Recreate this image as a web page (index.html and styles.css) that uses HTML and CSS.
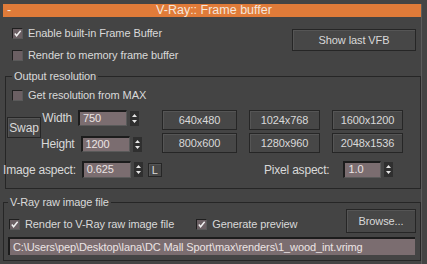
FILE: index.html
```html
<!DOCTYPE html>
<html lang="en">
<head>
    <meta charset="UTF-8">
    <title>V-Ray:: Frame buffer</title>
    <link rel="stylesheet" href="styles.css">
</head>
<body>
    <div class="rollout">
        <div class="title">
            <span class="minus">-</span>
            <span class="title-text">V-Ray:: Frame buffer</span>
        </div>

        <div class="top">
            <div class="checks">
                <label class="check"><span class="box on"><svg viewBox="0 0 10 10"><path d="M2 5 L4 7.5 L8.5 2" /></svg></span>Enable built-in Frame Buffer</label>
                <label class="check"><span class="box"></span>Render to memory frame buffer</label>
            </div>
            <button class="btn vfb">Show last VFB</button>
        </div>

        <fieldset class="group res">
            <legend>Output resolution</legend>
            <label class="check"><span class="box"></span>Get resolution from MAX</label>

            <div class="size">
                <button class="btn swap">Swap</button>
                <div class="fields">
                    <div class="field">
                        <span class="lbl">Width</span>
                        <span class="num">750</span>
                        <span class="spin"><svg viewBox="0 0 9 15"><path d="M4.5 3 L7 6 L2 6 Z M4.5 12 L7 9 L2 9 Z" /></svg></span>
                    </div>
                    <div class="field">
                        <span class="lbl">Height</span>
                        <span class="num">1200</span>
                        <span class="spin"><svg viewBox="0 0 9 15"><path d="M4.5 3 L7 6 L2 6 Z M4.5 12 L7 9 L2 9 Z" /></svg></span>
                    </div>
                </div>
                <div class="presets">
                    <button class="btn">640x480</button>
                    <button class="btn">1024x768</button>
                    <button class="btn">1600x1200</button>
                    <button class="btn">800x600</button>
                    <button class="btn">1280x960</button>
                    <button class="btn">2048x1536</button>
                </div>
            </div>

            <div class="aspect">
                <div class="field image">
                    <span class="lbl wide">Image aspect:</span>
                    <span class="num">0.625</span>
                    <span class="spin"><svg viewBox="0 0 9 15"><path d="M4.5 3 L7 6 L2 6 Z M4.5 12 L7 9 L2 9 Z" /></svg></span>
                    <button class="btn lock">L</button>
                </div>
                <div class="field pixel">
                    <span class="lbl">Pixel aspect:</span>
                    <span class="num small">1.0</span>
                    <span class="spin"><svg viewBox="0 0 9 15"><path d="M4.5 3 L7 6 L2 6 Z M4.5 12 L7 9 L2 9 Z" /></svg></span>
                </div>
            </div>
        </fieldset>

        <fieldset class="group raw">
            <legend>V-Ray raw image file</legend>
            <div class="raw-row">
                <label class="check"><span class="box on"><svg viewBox="0 0 10 10"><path d="M2 5 L4 7.5 L8.5 2" /></svg></span>Render to V-Ray raw image file</label>
                <label class="check preview"><span class="box on"><svg viewBox="0 0 10 10"><path d="M2 5 L4 7.5 L8.5 2" /></svg></span>Generate preview</label>
                <button class="btn browse">Browse...</button>
            </div>
            <div class="path">C:\Users\pep\Desktop\lana\DC Mall Sport\max\renders\1_wood_int.vrimg</div>
        </fieldset>
    </div>
</body>
</html>
```

FILE: styles.css
```css
body {
    margin: 0;
    width: 427px;
    height: 264px;
    overflow: hidden;
    background-color: #444444;
    color: #d9d9d9;
    font-family: "Liberation Sans", Arial, sans-serif;
    font-size: 11px;
    letter-spacing: -0.1px;
}
.rollout {
    margin: 4px 0 0 3px;
    width: 418px;
    height: 260px;
    border-right: 1px solid #5c5c5c;
}
.title {
    height: 13px;
    line-height: 13px;
    background-color: #e07b39;
    color: #f4e6dc;
    display: flex;
    padding-left: 4px;
    font-size: 12.5px;
    letter-spacing: 0;
}
.title .minus {
    width: 10px;
}
.title .title-text {
    flex: 1;
    text-align: center;
    padding-right: 10px;
}
.top {
    display: flex;
    justify-content: space-between;
    padding: 5px 5px 0 9px;
}
.check {
    display: flex;
    align-items: center;
    height: 22px;
    white-space: nowrap;
}
.box {
    flex: none;
    width: 9px;
    height: 9px;
    margin-right: 5px;
    background-color: #6b5f63;
    border-top: 1px solid #1f1f1f;
    border-left: 1px solid #1f1f1f;
    border-right: 1px solid #5a5a5a;
    border-bottom: 1px solid #5a5a5a;
    display: flex;
}
.box svg {
    width: 9px;
    height: 9px;
}
.box svg path {
    fill: none;
    stroke: #f2f2f2;
    stroke-width: 1.6;
}
.btn {
    font-family: inherit;
    font-size: 11px;
    letter-spacing: -0.1px;
    color: #d9d9d9;
    background-color: #474747;
    border: 1px solid #262626;
    box-shadow: inset 1px 1px 0 #555555;
    padding: 0;
    margin: 0;
}
.vfb {
    width: 124px;
    height: 22px;
    margin-top: 7px;
}
.group {
    border: 1px solid #262626;
    margin: 0;
    padding: 0;
    min-width: 0;
}
.group legend {
    padding: 0 2px;
    line-height: 13px;
    color: #d9d9d9;
}
.res {
    margin: 4px 0 0 2px;
    padding: 0 0 10px 0;
}
.res legend {
    margin-left: 6px;
}
.res > .check {
    height: 18px;
    margin: 3px 0 0 6px;
}
.size {
    display: flex;
    margin-top: 6px;
}
.swap {
    flex: 0 0 34px;
    height: 21px;
    margin: 7px 0 0 1px;
    font-size: 12px;
}
.fields {
    flex: 0 0 118px;
    display: flex;
    flex-direction: column;
    gap: 10px;
}
.field {
    display: flex;
    align-items: center;
    white-space: nowrap;
}
.lbl {
    flex: 0 0 31px;
    text-align: right;
    margin-right: 6px;
    font-size: 12px;
    letter-spacing: -0.2px;
}
.num {
    flex: 0 0 auto;
    width: 43px;
    height: 13px;
    line-height: 13px;
    padding-left: 3px;
    background-color: #7b6d70;
    color: #ece4e4;
    border-top: 2px solid #1c1c1c;
    border-left: 2px solid #1c1c1c;
    border-bottom: 1px solid #5a5a5a;
    border-right: 1px solid #5a5a5a;
}
.spin {
    flex: 0 0 9px;
    height: 15px;
    margin-left: 3px;
    background-color: #2f2f2f;
    display: flex;
}
.spin svg {
    width: 9px;
    height: 15px;
}
.spin svg path {
    fill: #e6e6e6;
}
.presets {
    display: grid;
    grid-template-columns: 75px 71px 71px;
    grid-auto-rows: 20px;
    column-gap: 12px;
    row-gap: 3px;
    margin-left: 3px;
}
.aspect {
    display: flex;
    margin-top: 8px;
}
.image {
    flex: 0 0 160px;
    margin-left: -3px;
}
.lbl.wide {
    flex: 0 0 72px;
}
.aspect .num {
    height: 14px;
}
.lock {
    flex: 0 0 14px;
    height: 14px;
    margin-left: 5px;
}
.pixel {
    margin-left: 101px;
}
.pixel .lbl {
    flex: 0 0 auto;
    margin: 0 14px 0 0;
}
.num.small {
    width: 32px;
}
.raw {
    margin-top: 7px;
    padding: 0 0 5px 0;
}
.raw legend {
    margin-left: 4px;
}
.raw-row {
    display: flex;
    align-items: flex-start;
    height: 27px;
}
.raw-row .check {
    margin: 4px 0 0 5px;
}
.raw-row .preview {
    margin-left: 22px;
}
.browse {
    flex: 0 0 70px;
    height: 24px;
    margin-left: auto;
    margin-right: 4px;
}
.path {
    margin: 1px 5px 0 4px;
    height: 16px;
    line-height: 16px;
    padding-left: 3px;
    background-color: #7b6d70;
    color: #ece4e4;
    border-top: 2px solid #1c1c1c;
    border-left: 2px solid #1c1c1c;
    white-space: nowrap;
    overflow: hidden;
    font-size: 11px;
}
```
